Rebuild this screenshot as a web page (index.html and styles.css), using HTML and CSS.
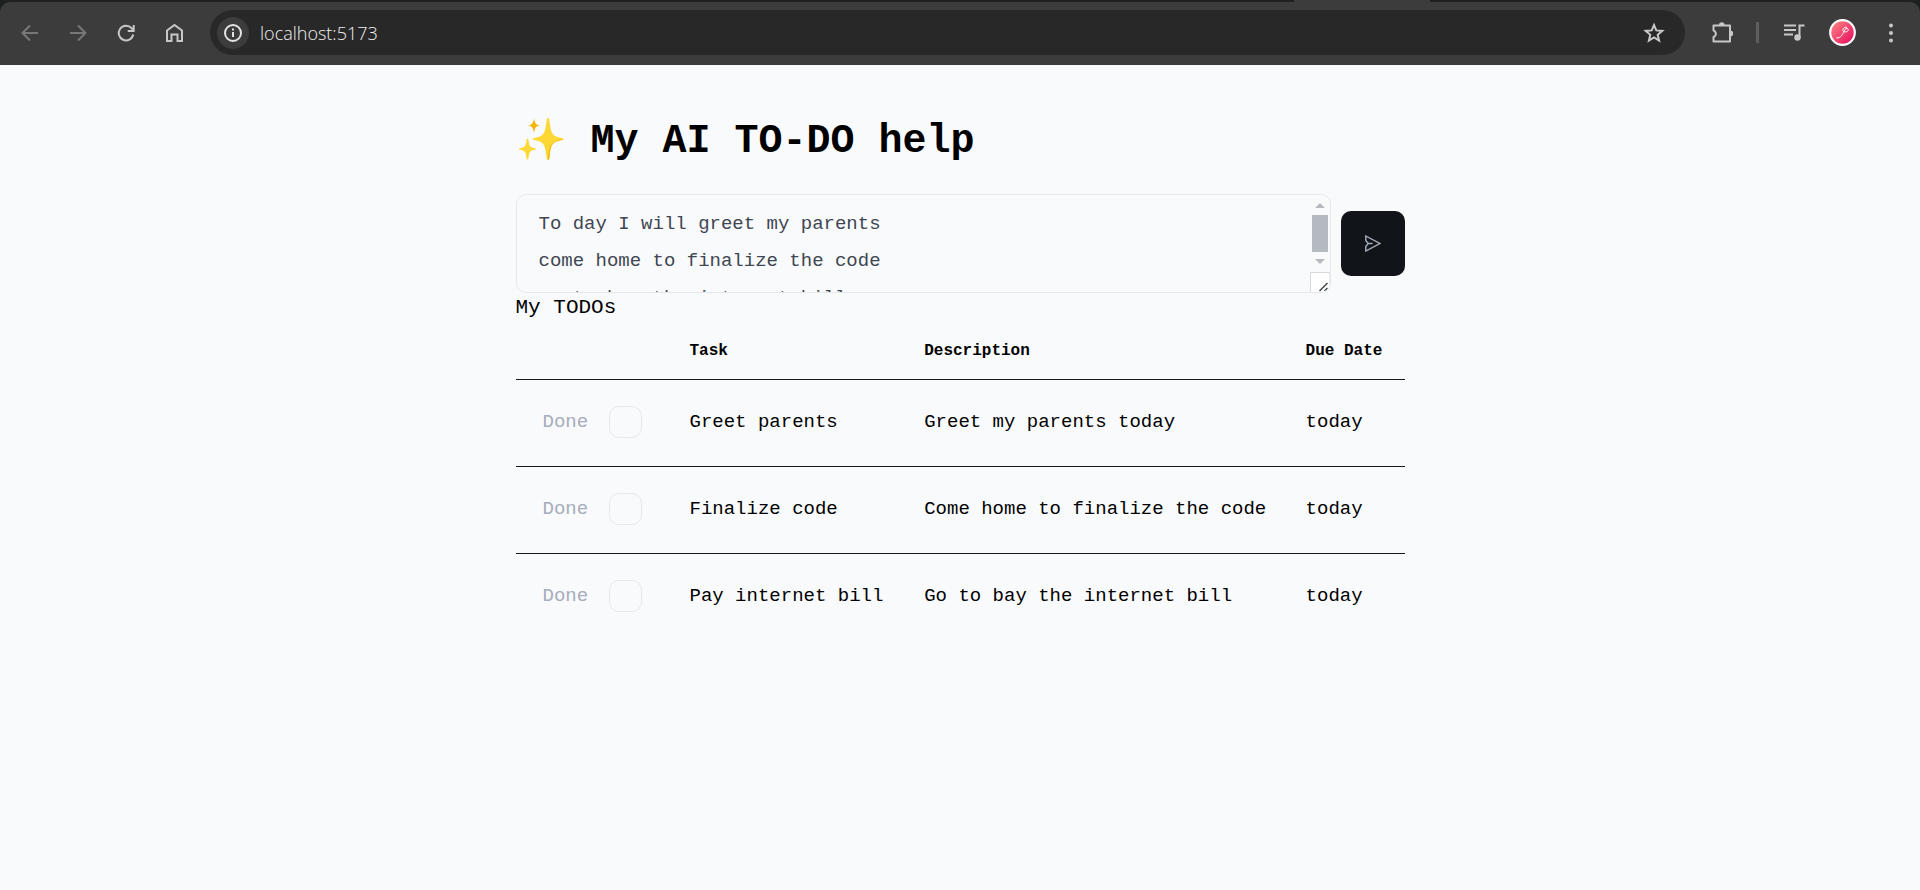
FILE: index.html
```html
<!DOCTYPE html>
<html lang="en">
<head>
<meta charset="utf-8">
<title>My AI TO-DO help</title>
<link rel="stylesheet" href="styles.css">
</head>
<body>
<div class="browser">
<div class="tabstrip"><div class="tab"></div></div>
<header class="toolbar">
  <nav class="nav" aria-label="Browser">
    <button class="icon dim" aria-label="Back"><svg viewBox="0 0 24 24"><path d="M20 12H5M12 4.500l-7.500 7.500 7.500 7.500"/></svg></button>
    <button class="icon dim" aria-label="Forward"><svg viewBox="0 0 24 24"><path d="M4 12h15M12 4.500l7.500 7.500-7.500 7.500"/></svg></button>
    <button class="icon" aria-label="Reload"><svg viewBox="0 0 24 24"><path d="M19.200 13.500A7.300 7.300 0 1 1 17.500 7.200L19.500 9.500M19.700 4v6h-6"/></svg></button>
    <button class="icon" aria-label="Home"><svg viewBox="0 0 24 24"><path d="M5 20V9.500L12.500 4 20 9.500V20h-4.500v-6.500h-6V20z"/></svg></button>
  </nav>
  <div class="omnibox">
    <button class="info" aria-label="Site information"><svg viewBox="0 0 24 24"><circle cx="12" cy="12" r="8"/><path d="M12 11v5M12 7.500v2"/></svg></button>
    <input class="address" aria-label="Address" value="localhost:5173">
    <button class="icon" aria-label="Bookmark"><svg viewBox="0 0 24 24"><path d="M12 4l2.300 5.400 6 .5-4.600 3.900 1.400 5.900-5.100-3.200-5.100 3.200 1.400-5.900-4.600-3.900 6-.5z"/></svg></button>
  </div>
  <div class="tools">
    <button class="icon" aria-label="Extensions"><svg viewBox="0 0 24 24"><path d="M4.500 4.500h16.500V20.500H4.500v-4.600a3.300 3.300 0 0 0 0-6.300z" stroke-linejoin="round"/><path class="fill" d="M10 4a2.800 2.800 0 0 1 5.600 0zM21.500 9.700a2.800 2.800 0 0 1 0 5.600z"/></svg></button>
    <span class="divider"></span>
    <button class="icon" aria-label="Media"><svg viewBox="0 0 24 24"><path d="M2 4.500h12M2 9h12M2 13.500h9M17.500 17V4.500h5"/><circle class="fill" cx="15.500" cy="16.500" r="3.200"/></svg></button>
    <button class="avatar" aria-label="Profile"><svg viewBox="0 0 27 27"><defs><linearGradient id="pink" x1="0" y1="0" x2="1" y2="1"><stop offset="0" stop-color="#ff8f85"/><stop offset="1" stop-color="#e6005c"/></linearGradient></defs><circle cx="13.500" cy="13.500" r="12.300" fill="url(#pink)" stroke="#fff" stroke-width="2.200"/><path d="M7.500 19c4.500 0 6-3.500 7.500-7 1.500-3.500 4.500-3 4.300-1-.3 2-4.300 2.800-5.300.8-.7-1.500 1.500-4.300 4-3.500" fill="none" stroke="#fff"/></svg></button>
    <button class="icon" aria-label="Menu"><svg viewBox="0 0 24 24"><g class="fill"><circle cx="12" cy="4.500" r="2"/><circle cx="12" cy="12" r="2"/><circle cx="12" cy="19.500" r="2"/></g></svg></button>
  </div>
</header>
</div>
<main class="page">
  <h1 class="title">
    <svg class="sparkles" viewBox="0 0 50 51" aria-hidden="true"><path fill="#fdd835" d="M32 2c1 0 1.300 1 1.600 4 1.400 12 3 14.500 12.400 16 2 .3 2 1.700 0 2-9.400 1.500-11 4-12.400 16-.3 3-.6 4-1.600 4s-1.300-1-1.600-4C29 28 27.400 25.500 18 24c-2-.3-2-1.700 0-2 9.400-1.500 11-4 12.400-16 .3-3 .6-4 1.600-4z"/><path fill="#f4b400" d="M47 23c0 .6-.5.900-1 1-9.400 1.500-11 4-12.400 16-.3 3-.6 4-1.600 4 0-3 .6-10 3-14.500C37 25.500 41 24 47 23z"/><path fill="#fdd835" d="M11.500 22.500c.8 0 .9 1 1.100 2.500.7 5 1.600 6.500 6.400 7.300 1.500.3 1.500 1.200 0 1.500-4.800.8-5.700 2.300-6.400 7.200-.2 1.500-.3 2.500-1.100 2.500s-.9-1-1.100-2.500c-.7-4.900-1.600-6.400-6.400-7.200-1.500-.3-1.500-1.200 0-1.500 4.800-.8 5.700-2.300 6.400-7.300.2-1.500.3-2.500 1.100-2.500z"/><path fill="#f4b400" d="M18 2.500c.9 4.800 1.800 6.200 6 7-4.200.8-5.100 2.200-6 7.500-.9-5.300-1.800-6.700-6-7.500 4.200-.8 5.100-2.200 6-7z"/></svg>
    My AI TO-DO help
  </h1>
  <form class="composer">
    <div class="field">
      <textarea class="prompt" aria-label="Describe your tasks">To day I will greet my parents
come home to finalize the code
go to bay the internet bill</textarea>
      <svg class="scroll" viewBox="0 0 20 97" aria-hidden="true"><path fill="#b4babf" d="M5 13l5-5 5 5zM2 20h16v37H2zM5 64l5 5 5-5z"/><path fill="#fff" stroke="#d5d8dc" d="M.5 97V77.500H20V98H.5z"/><path fill="none" stroke="#444" stroke-width="1.500" d="M9.500 96l8-8M14.500 96l3-3"/></svg>
    </div>
    <button class="send" type="button" aria-label="Send"><svg viewBox="0 0 16 17"><path d="M.8 1l14 7.500-14 7.500V11.500l2.500-3L.8 5.500zM3.300 8.500h4.200"/></svg></button>
  </form>
  <h2 class="subtitle">My TODOs</h2>
  <table class="todos">
    <colgroup><col class="c-done"><col class="c-task"><col class="c-desc"><col></colgroup>
    <thead><tr><td></td><th scope="col">Task</th><th scope="col">Description</th><th scope="col">Due Date</th></tr></thead>
    <tbody>
      <tr><td><label class="done">Done <input type="checkbox"></label></td><td>Greet parents</td><td>Greet my parents today</td><td>today</td></tr>
      <tr><td><label class="done">Done <input type="checkbox"></label></td><td>Finalize code</td><td>Come home to finalize the code</td><td>today</td></tr>
      <tr><td><label class="done">Done <input type="checkbox"></label></td><td>Pay internet bill</td><td>Go to bay the internet bill</td><td>today</td></tr>
    </tbody>
  </table>
</main>
</body>
</html>
```
FILE: styles.css
```css
* { box-sizing: border-box; }
body {
  margin: 0;
  min-height: 100vh;
  background: #f9fafc;
  color: #000;
  font-family: "Liberation Mono", monospace;
}
button { padding: 0; border: 0; background: none; }
svg { display: block; }

.browser { background: #1f2020; }
.tabstrip { height: 2px; padding-left: 67.4%; }
.tab { width: 136px; height: 2px; background: #3c3c3c; }
.toolbar {
  display: flex;
  align-items: center;
  gap: 24px;
  height: 63px;
  padding: 0 17px 2px 18px;
  background: #3c3c3c;
  border-radius: 10px 10px 0 0;
}
.nav { display: flex; gap: 24px; }
.tools { display: flex; align-items: center; gap: 23px; }
.icon { width: 24px; height: 24px; color: #c7c7c7; }
.icon svg, .info svg { width: 24px; height: 24px; fill: none; stroke: currentColor; stroke-width: 2; }
.icon .fill { fill: currentColor; stroke: none; }
.dim { color: #777; }
.omnibox {
  display: flex;
  flex: 1;
  align-items: center;
  height: 45px;
  padding: 0 19px 0 7px;
  background: #282828;
  border-radius: 23px;
}
.info {
  display: grid;
  place-items: center;
  width: 32px;
  height: 32px;
  color: #e3e3e3;
  background: #3c3c3c;
  border-radius: 50%;
}
.address {
  flex: 1;
  padding: 0 11px;
  border: 0;
  background: none;
  color: #f0f0f0;
  font: 300 18px "Open Sans", sans-serif;
}
.divider { width: 3px; height: 21px; background: #5e5e5e; }
.avatar { width: 27px; height: 27px; }

.page { max-width: 889px; margin: 0 auto; padding-top: 48px; }
.title {
  display: flex;
  align-items: center;
  gap: 25px;
  margin: 0 0 24px;
  font-size: 40px;
  line-height: 57px;
}
.sparkles { width: 50px; height: 51px; }
.composer { display: flex; align-items: center; gap: 10px; }
.field { position: relative; flex: 1; }
.prompt {
  display: block;
  width: 100%;
  height: 99px;
  padding: 11px 22px;
  overflow: hidden;
  resize: none;
  border: 1px solid #e6e8eb;
  border-radius: 10px;
  background: #f9fafc;
  color: #3f4652;
  font: 19px/37px "Liberation Mono", monospace;
}
.scroll { position: absolute; top: 1px; right: 1px; width: 20px; height: 97px; border-bottom-right-radius: 9px; }
.send {
  display: grid;
  place-items: center;
  width: 64px;
  height: 65px;
  border-radius: 10px;
  background: #111418;
}
.send svg { width: 16px; height: 17px; fill: none; stroke: #a6adbb; stroke-width: 1.4; }
.subtitle { margin: 0; font-size: 21px; font-weight: 400; line-height: 30px; }

.todos { width: 100%; table-layout: fixed; border-collapse: collapse; font-size: 19px; }
.c-done { width: 17.1%; }
.c-task { width: 26.4%; }
.c-desc { width: 42.9%; }
.todos th, .todos td { padding: 0 0 0 22px; text-align: left; white-space: nowrap; }
.todos th { height: 56px; font-size: 16px; }
.todos tbody td { height: 87px; padding-bottom: 2px; border-top: 1px solid #15191e; }
.done { display: flex; align-items: center; gap: 21px; padding-left: 5px; color: #a6adbb; }
.done input {
  appearance: none;
  width: 33px;
  height: 32px;
  margin: 0;
  border: 1px solid #e6e8eb;
  border-radius: 10px;
}
```
